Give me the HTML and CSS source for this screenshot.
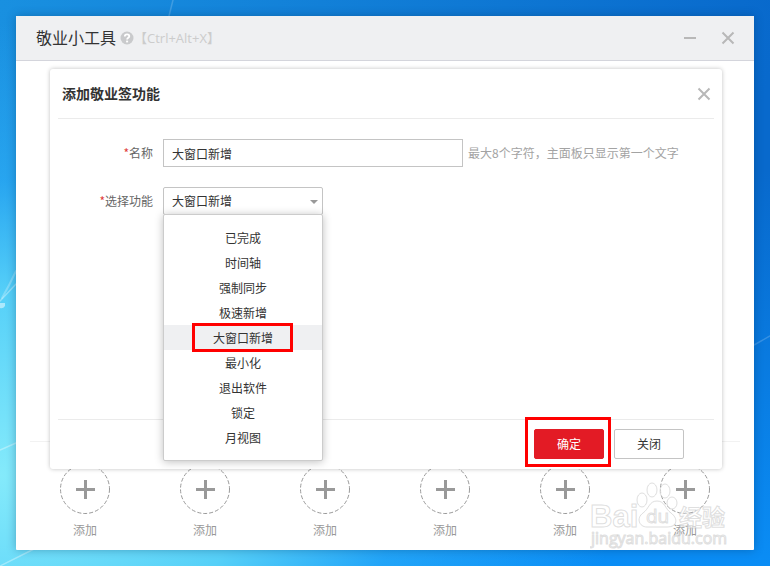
FILE: index.html
```html
<!DOCTYPE html>
<html lang="zh-CN">
<head>
<meta charset="utf-8">
<meta name="viewport" content="width=device-width, initial-scale=1">
<title>敬业小工具</title>
<link rel="stylesheet" href="styles.css">
</head>
<body>
<svg class="rays" viewBox="0 0 770 566" preserveAspectRatio="none" aria-hidden="true">
  <g fill="none" stroke="#fff" stroke-linecap="round">
    <path d="M0 301 16 284M0 450 16 443M0 566 34 549" stroke-opacity=".35" stroke-width="1.5"/>
    <path d="M2 298Q9 286 16 271" stroke-opacity=".25" stroke-width="2"/>
    <path d="M754 345 770 336M173 0 169 16" stroke-opacity=".18" stroke-width="1.5"/>
  </g>
  <path d="M0 303h5v3q-2 3-5 2z" fill="#fff" fill-opacity=".5"/>
</svg>
<main class="window">
  <header class="titlebar">
    <h1>敬业小工具</h1>
    <svg class="help" viewBox="0 0 14 14" aria-hidden="true">
      <circle cx="7" cy="7" r="6.5" fill="#c9cacc"/>
      <path d="M4.8 5.4C4.8 2.6 9.3 2.7 9.3 5.3 9.3 6.9 7.1 6.8 7.1 8.6" fill="none" stroke="#fff" stroke-width="1.8"/>
      <path d="M6.1 9.6h2v1.8h-2z" fill="#fff"/>
    </svg>
    <span class="shortcut">【Ctrl+Alt+X】</span>
    <div class="controls">
      <button type="button" class="icon-button" aria-label="最小化"><svg viewBox="0 0 14 14"><path d="M1 7h12"/></svg></button>
      <button type="button" class="icon-button" aria-label="关闭窗口"><svg viewBox="0 0 14 14"><path d="M1.5 1.5l11 11M12.5 1.5l-11 11"/></svg></button>
    </div>
  </header>

  <div class="content">
    <section class="tools">
      <hr>
      <div class="tool-grid">
        <button type="button" class="tool"><svg viewBox="0 0 50 50"><circle cx="25" cy="25" r="24.5"/><path d="M16 25.5h19M25.500 16v19"/></svg>添加</button>
        <button type="button" class="tool"><svg viewBox="0 0 50 50"><circle cx="25" cy="25" r="24.5"/><path d="M16 25.5h19M25.500 16v19"/></svg>添加</button>
        <button type="button" class="tool"><svg viewBox="0 0 50 50"><circle cx="25" cy="25" r="24.5"/><path d="M16 25.5h19M25.500 16v19"/></svg>添加</button>
        <button type="button" class="tool"><svg viewBox="0 0 50 50"><circle cx="25" cy="25" r="24.5"/><path d="M16 25.5h19M25.500 16v19"/></svg>添加</button>
        <button type="button" class="tool"><svg viewBox="0 0 50 50"><circle cx="25" cy="25" r="24.5"/><path d="M16 25.5h19M25.500 16v19"/></svg>添加</button>
        <button type="button" class="tool"><svg viewBox="0 0 50 50"><circle cx="25" cy="25" r="24.5"/><path d="M16 25.5h19M25.500 16v19"/></svg>添加</button>
      </div>
    </section>

    <form class="dialog" role="dialog" aria-labelledby="dialog-title">
      <div class="dialog-head">
        <h2 id="dialog-title">添加敬业签功能</h2>
        <button type="button" class="icon-button" aria-label="关闭对话框"><svg viewBox="0 0 14 14"><path d="M1.500 1.500l11 11M12.500 1.500l-11 11"/></svg></button>
      </div>
      <div class="fields">
        <div class="field">
          <label for="name"><span class="required">*</span>名称</label>
          <input id="name" class="control name" type="text" maxlength="8" value="大窗口新增">
          <span class="hint">最大8个字符，主面板只显示第一个文字</span>
        </div>
        <div class="field">
          <label for="feature"><span class="required">*</span>选择功能</label>
          <div class="picker">
            <select id="feature" class="control feature"><option>大窗口新增</option></select>
            <ul class="menu" role="listbox" aria-label="选择功能">
              <li role="option">已完成</li>
              <li role="option">时间轴</li>
              <li role="option">强制同步</li>
              <li role="option">极速新增</li>
              <li role="option" aria-selected="true" class="selected">大窗口新增</li>
              <li role="option">最小化</li>
              <li role="option">退出软件</li>
              <li role="option">锁定</li>
              <li role="option">月视图</li>
            </ul>
          </div>
        </div>
      </div>
      <div class="actions">
        <span class="marked"><button type="submit" class="button primary">确定</button></span>
        <button type="button" class="button">关闭</button>
      </div>
    </form>
  </div>

  <svg class="watermark" viewBox="0 0 140 70" aria-hidden="true">
    <g class="outline">
      <text x="0" y="47" class="brand">Bai</text>
      <ellipse cx="52" cy="20" rx="5" ry="7"/>
      <ellipse cx="62" cy="10" rx="5" ry="7"/>
      <ellipse cx="75" cy="11" rx="5" ry="7"/>
      <ellipse cx="82" cy="23" rx="5" ry="6"/>
      <path d="M67 21C59 21 59 29 53 33 46 38 49 47 57 47H77C88 47 88 38 81 33 75 29 75 21 67 21z"/>
      <text x="56" y="43" class="du">du</text>
      <text x="89" y="46" class="word">经验</text>
      <text x="1" y="64" class="site">jingyan.baidu.com</text>
    </g>
  </svg>
</main>
</body>
</html>
```
FILE: styles.css
```css
* {
  box-sizing: border-box;
}

body {
  margin: 0;
  min-height: 100vh;
  padding: 16px;
  display: flex;
  font: 12px/24px "Noto Sans CJK SC", sans-serif;
  color: #333;
  background:
    radial-gradient(ellipse 80% 80% at 0 84%, #84eafb 0, rgb(86 208 248) 40%, rgb(50 180 250 / 60%) 65%, transparent 100%),
    linear-gradient(to top, #0a8df5 0, transparent 70%),
    linear-gradient(100deg, #1990e0, #0869cc 90%);
}

h1, h2, ul {
  margin: 0;
  padding: 0;
}

button, input, select {
  margin: 0;
  font: inherit;
  color: inherit;
}

.rays {
  position: absolute;
  inset: 0;
  width: 100%;
  height: 100%;
}

.window {
  position: relative;
  flex: 1;
  display: flex;
  flex-direction: column;
  background: #fff;
  border-radius: 1px;
  box-shadow: 0 0 10px rgb(0 50 90 / 35%);
}

.titlebar {
  display: flex;
  align-items: center;
  height: 45px;
  padding: 0 19px 0 20px;
  background: #eff0f2;
  border-bottom: 1px solid #d4d5dc;
}

.titlebar h1 {
  padding-bottom: 2px;
  font-size: 16px;
  font-weight: 400;
}

.help {
  width: 14px;
  height: 14px;
  margin-left: 4px;
}

.shortcut {
  font-family: "Open Sans", "Noto Sans CJK SC", sans-serif;
  font-size: 13px;
  color: #ccc;
}

.controls {
  display: flex;
  gap: 24px;
  margin-left: auto;
}

.icon-button {
  display: flex;
  padding: 0;
  border: 0;
  background: none;
}

.icon-button svg {
  width: 14px;
  height: 14px;
  fill: none;
  stroke: #b8b8b8;
  stroke-width: 2;
}

.content {
  position: relative;
  flex: 1;
  display: flex;
  flex-direction: column;
  justify-content: flex-end;
}

.tools hr {
  margin: 0 14px 22px;
  border: 0;
  border-top: 1px solid #f2f2f2;
}

.tool-grid {
  display: grid;
  grid-template-columns: repeat(6, 1fr);
  padding: 0 9px 8px;
}

.tool {
  display: flex;
  flex-direction: column;
  align-items: center;
  gap: 4px;
  padding: 0;
  border: 0;
  background: none;
  color: #999;
}

.tool svg {
  width: 50px;
  height: 50px;
  fill: none;
  stroke: #999;
}

.tool circle {
  stroke-dasharray: 4 2;
}

.tool path {
  stroke-width: 3;
}

.dialog {
  position: absolute;
  inset: 8px 32px 81px 34px;
  display: flex;
  flex-direction: column;
  padding: 0 8px;
  background: #fff;
  border-radius: 3px;
  box-shadow: 0 0 4px rgb(0 0 0 / 25%);
}

.dialog-head {
  display: flex;
  align-items: center;
  justify-content: space-between;
  height: 50px;
  padding: 0 3px 0 4px;
  border-bottom: 1px solid #ebebeb;
}

.dialog-head h2 {
  padding-bottom: 2px;
  font-size: 14px;
}

.fields {
  flex: 1;
  display: flex;
  flex-direction: column;
  gap: 20px;
  padding-top: 20px;
}

.field {
  display: flex;
  align-items: center;
}

.field label {
  width: 95px;
  margin-right: 10px;
  text-align: right;
  color: #666;
}

.required {
  color: #e03c3c;
}

.control {
  display: block;
  height: 28px;
  padding: 0 8px;
  border: 1px solid #c4c4c4;
  background: #fff;
}

.name {
  width: 300px;
}

.hint {
  margin-left: 5px;
  color: #a3a3a3;
}

.picker {
  position: relative;
  width: 160px;
}

.picker::after {
  content: "";
  position: absolute;
  top: 13px;
  right: 5px;
  border: 4px solid transparent;
  border-top-color: #999;
  border-bottom: 0;
}

.feature {
  width: 100%;
  appearance: none;
  border-radius: 2px;
}

.menu {
  position: absolute;
  z-index: 1;
  top: 27px;
  left: 0;
  right: 0;
  padding: 10px 0;
  list-style: none;
  line-height: 25px;
  text-align: center;
  background: #fff;
  border: 1px solid #ccc;
  border-radius: 2px;
  box-shadow: 0 1px 8px rgb(0 0 0 / 25%);
}

.selected {
  position: relative;
  background: #eff0f2;
}

.selected::after,
.marked::after {
  content: "";
  position: absolute;
  border: 3px solid #f00;
}

.selected::after {
  inset: -2px 29px -2px 28px;
}

.actions {
  display: flex;
  justify-content: flex-end;
  gap: 10px;
  height: 50px;
  padding: 9px 30px 0 0;
  border-top: 1px solid #ebebeb;
}

.button {
  display: block;
  width: 70px;
  height: 30px;
  padding: 0;
  border: 1px solid #c4c4c4;
  border-radius: 2px;
  background: #fff;
}

.primary {
  border-color: #e31b25;
  background: #e31b25;
  color: #fff;
}

.marked {
  position: relative;
  height: 30px;
}

.marked::after {
  inset: -12px -7px -8px -9px;
}

.watermark {
  position: absolute;
  right: 24px;
  bottom: 0;
  width: 140px;
  height: 70px;
  pointer-events: none;
}

.outline {
  fill: rgb(255 255 255 / 60%);
  stroke: rgb(195 195 195 / 55%);
  font-family: "Open Sans", "Noto Sans CJK SC", sans-serif;
  font-weight: 700;
}

.brand {
  font-family: "Liberation Sans", sans-serif;
  font-size: 31px;
}

.du {
  font-size: 19px;
  font-weight: 400;
}

.word {
  font-size: 23px;
}

.site {
  font-size: 16px;
  font-weight: 400;
}
```
